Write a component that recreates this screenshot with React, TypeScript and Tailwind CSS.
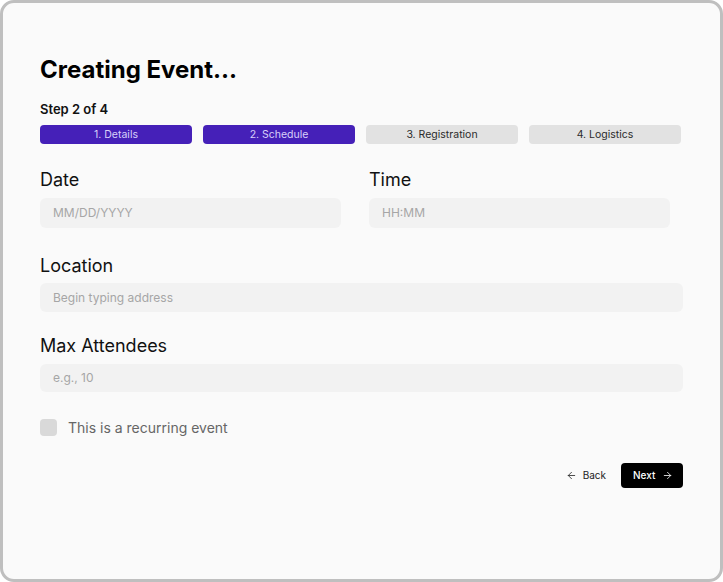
import { ArrowLeft, ArrowRight } from "lucide-react";

const steps = [
  { title: "1. Details", done: true },
  { title: "2. Schedule", done: true },
  { title: "3. Registration", done: false },
  { title: "4. Logistics", done: false },
];

const Field = ({
  label,
  placeholder,
  className,
  inputClass = "mt-[9px] h-[30px]",
}: {
  label: string;
  placeholder: string;
  className?: string;
  inputClass?: string;
}) => {
  return (
    <div className={className}>
      <div className="text-[18px] leading-none text-[#111]">{label}</div>
      <div
        className={`${inputClass} rounded-[6px] bg-[#f2f2f2] pl-[13px] flex items-center text-[12px] text-[#a6a6a6]`}
      >
        {placeholder}
      </div>
    </div>
  );
};

const App = () => {
  return (
    <div
      className="w-[723px] h-[582px] bg-white"
      style={{ fontFamily: "Inter, 'Noto Sans', sans-serif" }}
    >
      <div className="w-full h-full rounded-[14px] border-[3px] border-[#bfbfbf] bg-[#fafafa] pt-[55px] pl-[37px] pr-[37px] flex flex-col">
        <h1 className="text-[24px] leading-none font-bold text-black">
          Creating Event...
        </h1>
        <div className="mt-[21px] text-[13px] leading-none font-semibold text-[#111]">
          Step 2 of 4
        </div>
        <div className="mt-[9px] w-[641px] grid grid-cols-4 gap-[11px]">
          {steps.map((s, i) => (
            <div
              key={i}
              className={
                s.done
                  ? "h-[19px] rounded-[4px] bg-[#4520b8] text-[#d8d0fa] text-[10.5px] flex items-center justify-center"
                  : "h-[19px] rounded-[4px] bg-[#e2e2e2] text-[#2b2b2b] text-[10.5px] flex items-center justify-center"
              }
            >
              {s.title}
            </div>
          ))}
        </div>

        <div className="mt-[27px] flex gap-[28px]">
          <Field label="Date" placeholder="MM/DD/YYYY" className="w-[301px]" />
          <Field label="Time" placeholder="HH:MM" className="w-[301px]" />
        </div>

        <Field
          label="Location"
          placeholder="Begin typing address"
          className="mt-[29px] w-[643px]"
          inputClass="mt-[8px] h-[29px]"
        />
        <Field
          label="Max Attendees"
          placeholder="e.g., 10"
          className="mt-[25px] w-[643px]"
          inputClass="mt-[9px] h-[28px]"
        />

        <div className="mt-[27px] flex items-center gap-[11px]">
          <div className="w-[17px] h-[17px] rounded-[4px] bg-[#d9d9d9]"></div>
          <div className="text-[14px] leading-none text-[#666]">
            This is a recurring event
          </div>
        </div>

        <div className="mt-[27px] w-[643px] flex justify-end items-center gap-[15px]">
          <button className="flex items-center gap-[6px] text-[10px] text-[#222]">
            <ArrowLeft size={11} strokeWidth={1.75} />
            Back
          </button>
          <button className="h-[25px] w-[62px] rounded-[4px] bg-black text-white text-[10px] font-medium flex items-center pl-[12px] gap-[7px]">
            Next
            <ArrowRight size={11} strokeWidth={1.75} />
          </button>
        </div>
      </div>
    </div>
  );
};

export default App;
